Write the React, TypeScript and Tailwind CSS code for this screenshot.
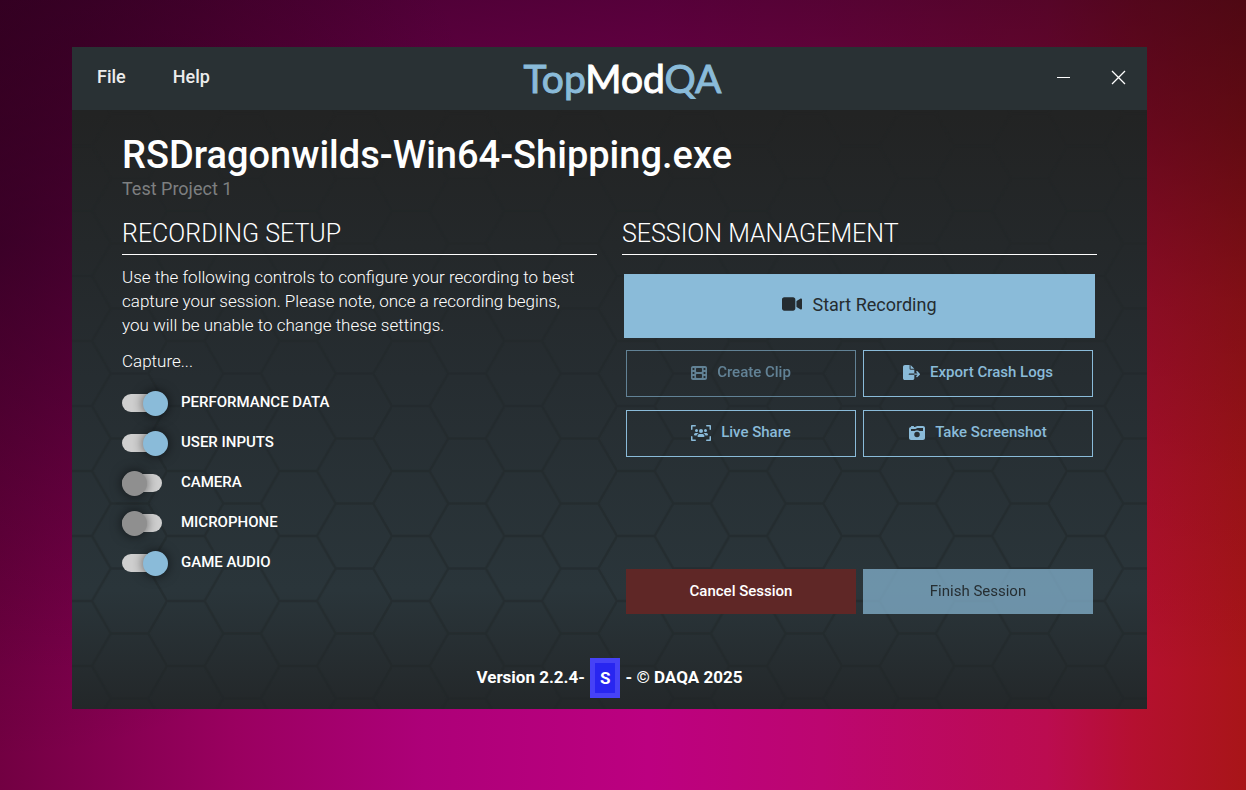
import { useState } from "react";
import { FaCameraRetro, FaFileExport, FaFilm, FaUsersViewfinder, FaVideo } from "react-icons/fa6";

const CAPTURE_OPTIONS = [
  { id: "performance", label: "PERFORMANCE DATA", on: true },
  { id: "inputs", label: "USER INPUTS", on: true },
  { id: "camera", label: "CAMERA", on: false },
  { id: "microphone", label: "MICROPHONE", on: false },
  { id: "audio", label: "GAME AUDIO", on: true },
];

function HexBackdrop() {
  return (
    <svg className="absolute inset-0 h-full w-full" aria-hidden="true">
      <defs>
        <pattern id="hex" width="112.5" height="65" patternUnits="userSpaceOnUse" patternTransform="translate(95 34)">
          <path
            d="M0 0H37.5L56.25 32.5H93.75L112.5 0M37.5 65L56.25 32.5M93.75 32.5L112.5 65M0 65H37.5"
            fill="none"
            stroke="#1f2526"
            strokeWidth="2.5"
          />
        </pattern>
        <linearGradient id="fade" x1="0" y1="0" x2="0" y2="1">
          <stop offset="0" stopColor="#fff" stopOpacity="0" />
          <stop offset="0.3" stopColor="#fff" stopOpacity="0.25" />
          <stop offset="0.75" stopColor="#fff" stopOpacity="0.45" />
          <stop offset="1" stopColor="#fff" stopOpacity="0.35" />
        </linearGradient>
        <mask id="hexMask">
          <rect width="100%" height="100%" fill="url(#fade)" />
        </mask>
      </defs>
      <rect width="100%" height="100%" fill="url(#hex)" mask="url(#hexMask)" />
    </svg>
  );
}

function TitleBar() {
  return (
    <header className="grid h-[63px] grid-cols-[1fr_auto_1fr] items-center bg-[#293134] pr-[21px] pb-[2px] pl-[25px]">
      <nav className="flex gap-[47px] pb-[2px] text-[18px] font-medium text-[#ececec]">
        <button type="button">File</button>
        <button type="button">Help</button>
      </nav>
      <div className="pl-[22px] font-['Lato',sans-serif] text-[39px] leading-[56px] text-[#8abbd9] [-webkit-text-stroke:1px]">
        Top<span className="text-white">Mod</span>QA
      </div>
      <div className="flex items-center gap-10 justify-self-end text-white">
        <button type="button" aria-label="Minimize">
          <svg className="h-[15px] w-[15px]" viewBox="0 0 15 15" stroke="currentColor">
            <path d="M1 7.5H14" />
          </svg>
        </button>
        <button type="button" aria-label="Close">
          <svg className="h-[15px] w-[15px]" viewBox="0 0 15 15" stroke="currentColor" strokeWidth="1.3">
            <path d="M1 1L14 14M14 1L1 14" />
          </svg>
        </button>
      </div>
    </header>
  );
}

function RecordingSetup() {
  const [enabled, setEnabled] = useState<Record<string, boolean>>(
    Object.fromEntries(CAPTURE_OPTIONS.map((o) => [o.id, o.on]))
  );

  return (
    <section>
      <h2 className="border-b border-white pt-[2px] pb-[2px] text-[25px] leading-9 font-light">RECORDING SETUP</h2>
      <p className="mt-[10px] pr-2 text-[17px] leading-6 font-light">
        Use the following controls to configure your recording to best capture your session. Please note, once a
        recording begins, you will be unable to change these settings.
      </p>
      <p className="mt-3 text-[17px] leading-6 font-light">Capture...</p>
      <div className="mt-[10px]">
        {CAPTURE_OPTIONS.map((o) => (
          <div key={o.id} className="flex h-10 items-center gap-[19px]">
            <input
              id={o.id}
              type="checkbox"
              checked={enabled[o.id]}
              onChange={() => setEnabled({ ...enabled, [o.id]: !enabled[o.id] })}
              className="flex h-[18px] w-10 shrink-0 appearance-none items-center rounded-full bg-[#cfcfcf] before:size-[25px] before:shrink-0 before:rounded-full before:bg-[#8f8f8f] before:shadow-[0_0_12px_rgba(0,0,0,0.6)] checked:before:translate-x-[21px] checked:before:bg-[#8abbd9]"
            />
            <label htmlFor={o.id} className="pb-[2px] text-[15px] font-medium">
              {o.label}
            </label>
          </div>
        ))}
      </div>
    </section>
  );
}

function SessionManagement() {
  const outline =
    "flex h-[47px] items-center justify-center border border-[#8abbd9] pb-[2px] text-[15px] font-medium text-[#8abbd9] disabled:opacity-60";

  return (
    <section className="flex flex-col">
      <h2 className="border-b border-white pt-[2px] pb-[2px] text-[25px] leading-9 font-light">SESSION MANAGEMENT</h2>
      <div className="mt-[19px] px-[2px]">
        <button
          type="button"
          className="flex h-16 w-full items-center justify-center gap-[10px] bg-[#8abbd9] pb-1 text-[18px] text-[#252c30]"
        >
          <FaVideo className="size-5" />
          Start Recording
        </button>
      </div>
      <div className="mt-3 grid grid-cols-2 gap-x-[7px] gap-y-[13px] px-1">
        <button type="button" disabled className={`${outline} gap-[10px]`}>
          <FaFilm className="size-4" />
          Create Clip
        </button>
        <button type="button" className={`${outline} gap-[10px]`}>
          <FaFileExport className="size-[17px]" />
          Export Crash Logs
        </button>
        <button type="button" className={`${outline} gap-[10px]`}>
          <FaUsersViewfinder className="size-5" />
          Live Share
        </button>
        <button type="button" className={`${outline} gap-[10px]`}>
          <FaCameraRetro className="size-4" />
          Take Screenshot
        </button>
      </div>
      <div className="mt-28 grid grid-cols-2 gap-x-[7px] px-1 text-[15px]">
        <button type="button" className="h-[45px] bg-[#5f2726] font-medium text-white">
          Cancel Session
        </button>
        <button type="button" disabled className="h-[45px] bg-[#8abbd9] text-[#252c30] disabled:opacity-70">
          Finish Session
        </button>
      </div>
    </section>
  );
}

export default function App() {
  return (
    <div className="flex min-h-screen bg-[radial-gradient(ellipse_500px_520px_at_0%_30%,rgba(30,0,30,0.45)_0%,rgba(30,0,30,0)_100%),linear-gradient(180deg,rgba(24,0,16,0.62)_0%,rgba(24,0,12,0.5)_15%,rgba(24,0,12,0.27)_38%,rgba(24,0,8,0.12)_60%,rgba(24,0,0,0)_85%),linear-gradient(90deg,#720042_0%,#9a0060_19%,#ad0078_34%,#bc0080_52%,#bc0670_66%,#bb0c50_84%,#b51030_91%,#a81518_100%)] pt-[47px] pr-[99px] pb-[81px] pl-[72px] font-['Roboto',sans-serif]">
      <div className="relative flex-1 bg-[linear-gradient(180deg,#222323_10%,#262d31_50%,#2a353a_82%,#232729_100%)] text-white">
        <HexBackdrop />
        <div className="relative flex h-full flex-col">
          <TitleBar />
          <main className="flex-1 px-[50px] pt-[21px]">
            <h1 className="text-[38px] leading-[48px] font-medium">RSDragonwilds-Win64-Shipping.exe</h1>
            <p className="text-[18px] leading-5 text-[#7d7f80]">Test Project 1</p>
            <div className="mt-[15px] grid grid-cols-2 gap-[25px]">
              <RecordingSetup />
              <SessionManagement />
            </div>
          </main>
          <footer className="flex items-center justify-center gap-[5px] pb-[11px] text-[17px] font-bold">
            <span>Version 2.2.4-</span>
            <span className="border-[5px] border-[#4642f6] bg-[#2826f0] px-[5px] leading-[30px]">S</span>
            <span>- © DAQA 2025</span>
          </footer>
        </div>
      </div>
    </div>
  );
}
